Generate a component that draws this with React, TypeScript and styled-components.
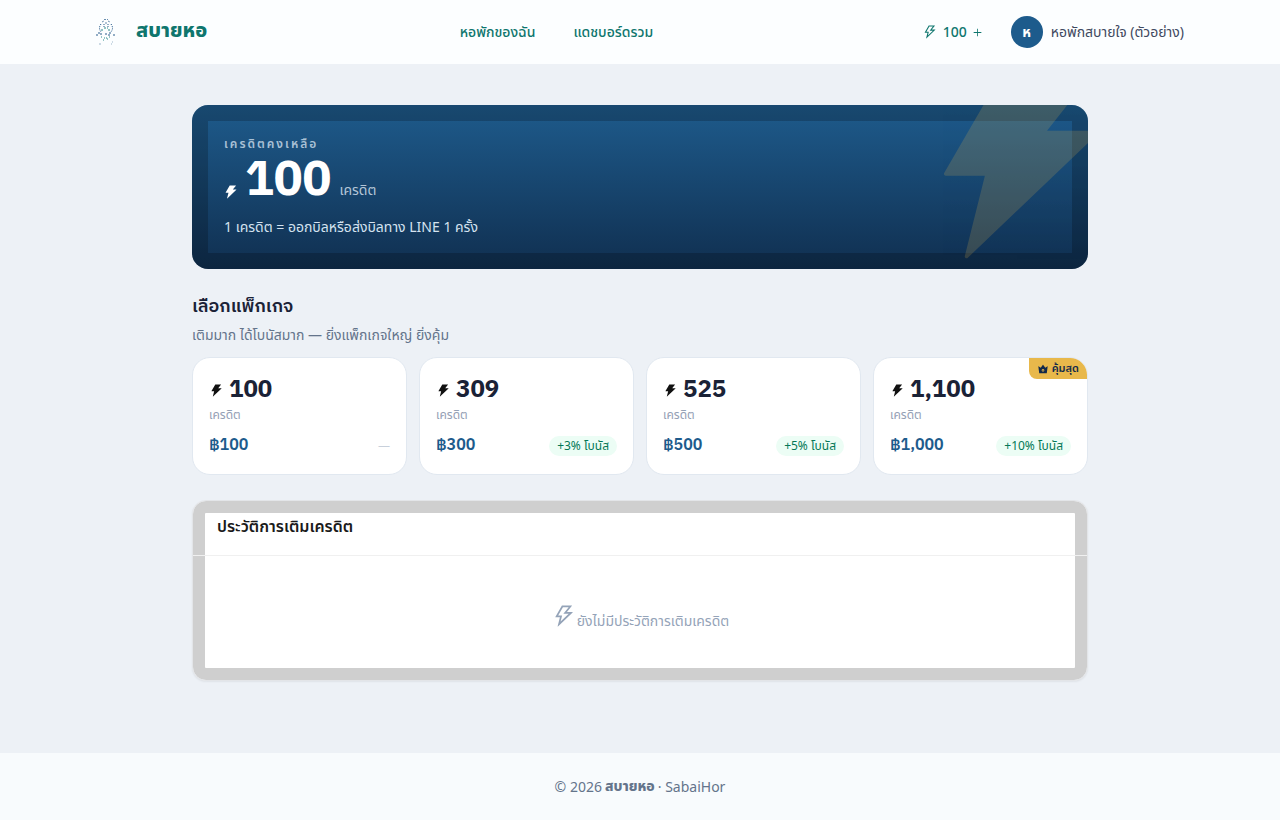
import React from "react";
import styled, { createGlobalStyle } from "styled-components";
import { AiFillThunderbolt, AiOutlineThunderbolt, AiOutlinePlus, AiFillCrown } from "react-icons/ai";

const display = `"IBM Plex Sans Thai", "IBM Plex Sans", "Noto Sans", sans-serif`;

const GlobalStyle = createGlobalStyle`
  *, *::before, *::after { box-sizing: border-box; }
  body {
    margin: 0;
    background: #edf1f6;
    color: #1a1a1a;
    font-family: "Noto Sans Thai", "Noto Sans", sans-serif;
    font-size: 14px;
    line-height: 22px;
  }
  h1, h2, p { margin: 0; }
  a { color: inherit; text-decoration: none; }
  button { font: inherit; color: inherit; cursor: pointer; }
`;

const Page = styled.div`
  min-height: 100vh;
  display: flex;
  flex-direction: column;
`;

const Header = styled.header`
  min-height: 64px;
  padding: 0 96px;
  display: flex;
  align-items: center;
  justify-content: space-between;
  background: #fcfeff;
`;

const Brand = styled.a`
  display: flex;
  align-items: center;
  gap: 20px;
  padding-bottom: 2px;
  color: #0f766e;
  font-size: 20px;
  line-height: 28px;
  font-weight: 800;
`;

const Nav = styled.nav`
  display: flex;
  gap: 38px;
  padding: 2px 16px 0 0;
  color: #0f766e;
  font-weight: 500;
`;

const Account = styled.div`
  display: flex;
  align-items: center;
  gap: 28px;
`;

const CreditLink = styled.a`
  display: flex;
  align-items: center;
  gap: 5px;
  color: #0f766e;
  font-weight: 500;
`;

const CreditCount = styled.span`
  padding-top: 2px;
`;

const UserButton = styled.button`
  display: flex;
  align-items: center;
  gap: 8px;
  padding: 0;
  border: 0;
  background: none;
  color: #3f4960;
`;

const UserName = styled.span`
  padding-top: 2px;
`;

const Avatar = styled.span`
  width: 32px;
  height: 32px;
  padding-top: 2px;
  border-radius: 50%;
  display: grid;
  place-items: center;
  background: #1d5b8c;
  color: #fff;
  font-weight: 700;
`;

const Main = styled.main`
  flex: 1;
  width: 100%;
  max-width: 896px;
  margin: 0 auto;
  padding: 41px 0 72px;
`;

const Hero = styled.section`
  position: relative;
  overflow: hidden;
  padding: 29px 32px 30px;
  border-radius: 16px;
  color: #fff;
  background: linear-gradient(180deg, #1e5b8c 0%, #102f50 100%);
  box-shadow: inset 0 0 0 16px rgba(0, 0, 0, 0.2);
`;

const HeroBolt = styled(AiFillThunderbolt)`
  position: absolute;
  top: -55px;
  right: -48px;
  width: 230px;
  height: 230px;
  color: #e8b84b;
  opacity: 0.18;
`;

const HeroLabel = styled.p`
  font-size: 12px;
  line-height: 20px;
  font-weight: 600;
  letter-spacing: 2px;
  color: #a9c1d6;
`;

const HeroAmount = styled.p`
  display: flex;
  align-items: baseline;
  gap: 8px;
  height: 55px;
  line-height: 55px;
  color: #b4c6d8;
`;

const HeroNumber = styled.strong`
  font-family: ${display};
  font-size: 48px;
  font-weight: 700;
  color: #fff;
  svg {
    width: 16px;
    height: 16px;
    margin: 0 6px 0 -1px;
    vertical-align: -5px;
  }
`;

const HeroNote = styled.p`
  margin-top: 8px;
  color: #d5e3f0;
`;

const Title = styled.h1`
  margin-top: 24px;
  font-family: ${display};
  font-size: 18px;
  line-height: 28px;
  font-weight: 600;
  color: #1a2236;
`;

const Subtitle = styled.p`
  margin-top: 4px;
  color: #64748b;
`;

const Packages = styled.div`
  display: grid;
  grid-template-columns: repeat(4, 1fr);
  gap: 12px;
  margin-top: 10px;
`;

const PackageCard = styled.button`
  position: relative;
  overflow: hidden;
  display: block;
  padding: 16px;
  text-align: left;
  border: 1px solid #e1e8f0;
  border-radius: 18px;
  background: #fff;
`;

const Amount = styled.span`
  display: flex;
  align-items: center;
  gap: 5px;
  font-family: ${display};
  font-size: 24px;
  line-height: 32px;
  font-weight: 700;
  color: #1a2236;
  svg { color: #111; }
`;

const Unit = styled.span`
  display: block;
  font-size: 12px;
  line-height: 18px;
  color: #94a0b5;
`;

const PriceRow = styled.span`
  display: flex;
  align-items: center;
  justify-content: space-between;
  margin-top: 10px;
`;

const Price = styled.span`
  font-family: ${display};
  font-size: 16px;
  line-height: 24px;
  font-weight: 600;
  color: #1d5b8c;
`;

const Bonus = styled.span<{ $empty?: boolean }>`
  padding: ${(p) => (p.$empty ? "0" : "0 8px")};
  border-radius: 10px;
  font-size: 12px;
  line-height: 20px;
  color: ${(p) => (p.$empty ? "#c8d0db" : "#047857")};
  background: ${(p) => (p.$empty ? "none" : "#ecfdf5")};
`;

const Ribbon = styled.span`
  position: absolute;
  top: 0;
  right: 0;
  display: flex;
  align-items: center;
  gap: 3px;
  padding: 0 8px;
  border-bottom-left-radius: 8px;
  font-size: 11px;
  line-height: 21px;
  font-weight: 600;
  color: #12294a;
  background: #e8b84b;
`;

const History = styled.section`
  margin-top: 25px;
  border: 1px solid #e3e5e8;
  border-radius: 14px;
  background: #fff;
  box-shadow: inset 0 0 0 12px rgba(0, 0, 0, 0.19), 0 1px 2px rgba(0, 0, 0, 0.06);
`;

const HistoryTitle = styled.h2`
  padding: 13px 24px 15px;
  border-bottom: 1px solid #f0f0f0;
  font-size: 16px;
  line-height: 26px;
  font-weight: 600;
`;

const Empty = styled.p`
  padding: 47px 24px 40px;
  text-align: center;
  line-height: 36px;
  color: #94a3b8;
  svg { vertical-align: -3px; }
`;

const Footer = styled.footer`
  min-height: 68px;
  padding-top: 2px;
  display: flex;
  justify-content: center;
  align-items: center;
  gap: 3px;
  background: #f8fbfd;
  color: #64748b;
`;

const FooterBrand = styled.strong`
  font-weight: 800;
  padding-bottom: 3px;
`;

const packages = [
  { credits: "100", price: "฿100", bonus: null, best: false },
  { credits: "309", price: "฿300", bonus: "+3% โบนัส", best: false },
  { credits: "525", price: "฿500", bonus: "+5% โบนัส", best: false },
  { credits: "1,100", price: "฿1,000", bonus: "+10% โบนัส", best: true },
];

const Logo = () => (
  <svg width="20" height="28" viewBox="0 0 20 28" fill="none" stroke="#2a5d8c" strokeWidth="1" aria-hidden="true">
    <path d="M8 2.5h4M6 5l2-1M12 4l2 1M9 6h2" strokeDasharray="2 1" opacity=".7" />
    <path d="M5 7c-2 3-2 5 0 8M15 7c2 3 2 5 0 8M8 7v4M12 7v4" strokeDasharray="1 1" />
    <path d="M5 13h3M12 13h3M8 11h4" stroke="#2a8c8a" strokeDasharray="2 1" />
    <path d="M0 18h3M4 17h3M9 17h2M12 18h3M17 18h3M2 16h2M13 16h2" strokeDasharray="2 1" />
    <path d="M5 20h2M8 21h3M13 20h2M7 23h2M11 22h2" stroke="#2a8c8a" strokeDasharray="1 1" />
    <path d="M3 27h2M16 25h1M15 27h1" opacity=".45" />
  </svg>
);

export default function App() {
  return (
    <Page>
      <GlobalStyle />
      <Header>
        <Brand href="#">
          <Logo />
          สบายหอ
        </Brand>
        <Nav>
          <a href="#dorms">หอพักของฉัน</a>
          <a href="#dashboard">แดชบอร์ดรวม</a>
        </Nav>
        <Account>
          <CreditLink href="#credits">
            <AiOutlineThunderbolt size={16} />
            <CreditCount>100</CreditCount>
            <AiOutlinePlus size={11} />
          </CreditLink>
          <UserButton type="button">
            <Avatar>ห</Avatar>
            <UserName>หอพักสบายใจ (ตัวอย่าง)</UserName>
          </UserButton>
        </Account>
      </Header>
      <Main>
        <Hero>
          <HeroBolt />
          <HeroLabel>เครดิตคงเหลือ</HeroLabel>
          <HeroAmount>
            <HeroNumber>
              <AiFillThunderbolt />
              100
            </HeroNumber>
            <span>เครดิต</span>
          </HeroAmount>
          <HeroNote>1 เครดิต = ออกบิลหรือส่งบิลทาง LINE 1 ครั้ง</HeroNote>
        </Hero>
        <Title>เลือกแพ็กเกจ</Title>
        <Subtitle>เติมมาก ได้โบนัสมาก — ยิ่งแพ็กเกจใหญ่ ยิ่งคุ้ม</Subtitle>
        <Packages>
          {packages.map((p) => (
            <PackageCard type="button" key={p.credits}>
              {p.best && (
                <Ribbon>
                  <AiFillCrown size={12} />
                  คุ้มสุด
                </Ribbon>
              )}
              <Amount>
                <AiFillThunderbolt size={15} />
                {p.credits}
              </Amount>
              <Unit>เครดิต</Unit>
              <PriceRow>
                <Price>{p.price}</Price>
                <Bonus $empty={!p.bonus}>{p.bonus ?? "—"}</Bonus>
              </PriceRow>
            </PackageCard>
          ))}
        </Packages>
        <History>
          <HistoryTitle>ประวัติการเติมเครดิต</HistoryTitle>
          <Empty>
            <AiOutlineThunderbolt size={26} />
            ยังไม่มีประวัติการเติมเครดิต
          </Empty>
        </History>
      </Main>
      <Footer>
        <span>© 2026</span>
        <FooterBrand>สบายหอ</FooterBrand>
        <span>· SabaiHor</span>
      </Footer>
    </Page>
  );
}
